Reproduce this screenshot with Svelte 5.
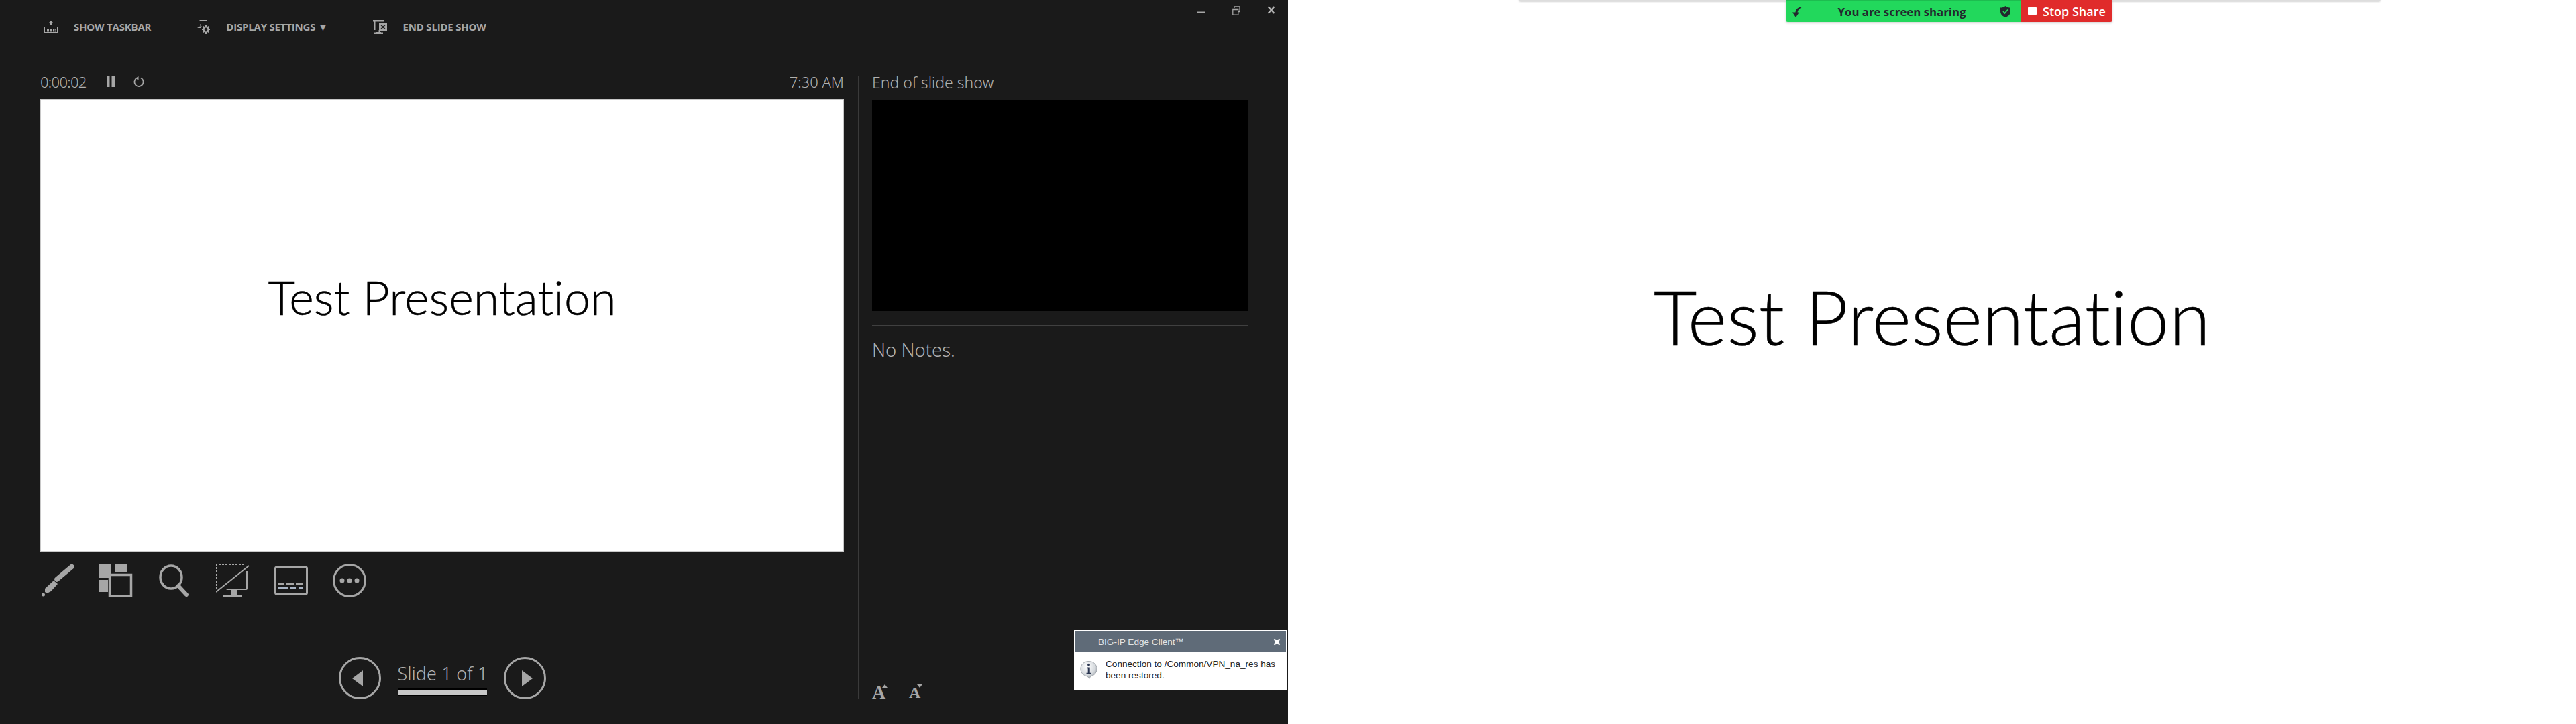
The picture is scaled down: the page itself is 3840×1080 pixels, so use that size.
<script>
  const title = "Test Presentation";
</script>

<div class="screens">
  <section class="presenter">
    <header class="topbar">
      <nav class="menu">
        <button class="menu-item">
          <svg width="20" height="18" viewBox="0 0 20 18">
            <path d="M10 0l4 4h-2.500v3h-3V4H6z" fill="#a6a6a6" />
            <rect x=".5" y="9.500" width="19" height="8" fill="none" stroke="#a6a6a6" />
            <path d="M4 12.500h3v3H4zM8.500 12.500h3v3h-3zM13 12.500h1.500v3H13zM15.500 12.500H17v1.200h-1.500zM15.500 14.500H17v1h-1.500z" fill="#a6a6a6" />
          </svg>
          <span>SHOW TASKBAR</span>
        </button>
        <button class="menu-item second">
          <svg width="19" height="20" viewBox="0 0 19 20">
            <path d="M3.500.5h11v10h-5M5 6v3" fill="none" stroke="#a6a6a6" />
            <path d="M0 12l4-2.500h3L5 12z" fill="#a6a6a6" />
            <circle cx="13" cy="14" r="3.600" fill="none" stroke="#a6a6a6" stroke-width="2.400" />
            <path d="M13 8v2.500M13 17.500V20M7 14h2.500M16.500 14H19M8.800 9.800l1.800 1.800M15.400 16.400l1.800 1.800M8.800 18.200l1.800-1.800M15.400 11.600l1.800-1.800" stroke="#a6a6a6" stroke-width="2" />
          </svg>
          <span>DISPLAY SETTINGS ▼</span>
        </button>
        <button class="menu-item third">
          <svg width="21" height="20" viewBox="0 0 21 20">
            <path d="M0 0h16v2.500H0zM2 2.500h1.500V15H2zM5 17h5v-2H8.500v2H12v1.500h3V20H1v-1.500h4z" fill="#a6a6a6" />
            <rect x="9" y="5" width="12" height="11" fill="#a6a6a6" />
            <path d="M12 7.500l6 6M18 7.500l-6 6" stroke="#1a1a1a" stroke-width="1.600" />
          </svg>
          <span>END SLIDE SHOW</span>
        </button>
      </nav>
      <div class="window-controls">
        <svg width="12" height="12" viewBox="0 0 12 12"><path d="M0 9.500h11" stroke="#a6a6a6" stroke-width="2" /></svg>
        <svg width="12" height="14" viewBox="0 0 12 14">
          <path d="M3 3V1h8v7.500H9M.8 4.500h8v8.700h-8zM.8 5.500h8" fill="none" stroke="#a6a6a6" stroke-width="1.300" />
        </svg>
        <svg width="12" height="12" viewBox="0 0 12 12"><path d="M1.500 1l9 10M10.500 1l-9 10" stroke="#b4b4b4" stroke-width="2.400" /></svg>
      </div>
    </header>
    <hr class="topbar-rule" />

    <div class="workspace">
      <div class="current">
        <div class="status">
          <span class="label">0:00:02</span>
          <svg class="pause" width="12" height="16" viewBox="0 0 12 16"><path d="M0 0h4.500v16H0zM7.500 0H12v16H7.500z" fill="#a6a6a6" /></svg>
          <svg class="restart" width="16" height="16" viewBox="0 0 16 16">
            <path d="M4.500 2.800A6.600 6.600 0 1 0 11 2.500" fill="none" stroke="#a6a6a6" stroke-width="1.800" />
            <path d="M7.500 0v6L3 2.800z" fill="#a6a6a6" />
          </svg>
          <span class="label clock">7:30 AM</span>
        </div>
        <div class="slide"><span class="slide-title small">{title}</span></div>

        <div class="tools">
          <svg width="50" height="50" viewBox="0 0 50 50">
            <path d="M24 23L46 4.500" stroke="#a6a6a6" stroke-width="7.500" stroke-linecap="round" />
            <path d="M19 25l6 5-10 11-6 3-3-2v-5z" fill="#a6a6a6" />
            <circle cx="3.500" cy="46" r="2.500" fill="#a6a6a6" />
          </svg>
          <svg width="50" height="50" viewBox="0 0 50 50">
            <path d="M0 0h17v21H0zM23 0h18v12H23zM0 24h13v18H0z" fill="#a6a6a6" />
            <rect x="15.500" y="16.500" width="32" height="32" fill="#1a1a1a" stroke="#a6a6a6" stroke-width="3.500" />
          </svg>
          <svg width="50" height="50" viewBox="0 0 50 50">
            <ellipse cx="20" cy="20" rx="16" ry="17" fill="none" stroke="#a6a6a6" stroke-width="3.500" />
            <path d="M31 33l12 13" stroke="#a6a6a6" stroke-width="6" stroke-linecap="round" />
          </svg>
          <svg width="50" height="50" viewBox="0 0 50 50">
            <path d="M1 38V1h44" fill="none" stroke="#a6a6a6" stroke-width="2" stroke-dasharray="3 2" />
            <path d="M0 42L49 3" stroke="#a6a6a6" stroke-width="2" />
            <path d="M44 11h3v26c0 1-1 2-2 2H15l2-1.500h27z" fill="#a6a6a6" />
            <path d="M22 39h9v7h8v4H11v-4h11z" fill="#a6a6a6" />
          </svg>
          <svg width="50" height="50" viewBox="0 0 50 50">
            <rect x="1.500" y="5" width="47" height="40" rx="2" fill="none" stroke="#a6a6a6" stroke-width="3" />
            <path d="M6 30h8M17 30h12M32 30h11" stroke="#a6a6a6" stroke-width="2" />
            <path d="M6 36h14M24 36h8M36 36h7" stroke="#a9b4c4" stroke-width="2" />
          </svg>
          <svg width="50" height="50" viewBox="0 0 50 50">
            <circle cx="25" cy="25" r="23.500" fill="none" stroke="#a6a6a6" stroke-width="3" />
            <circle cx="14" cy="25" r="3.500" fill="#a6a6a6" />
            <circle cx="25" cy="25" r="3.500" fill="#a6a6a6" />
            <circle cx="36" cy="25" r="3.500" fill="#a6a6a6" />
          </svg>
        </div>

        <div class="pager">
          <svg width="63" height="63" viewBox="0 0 63 63">
            <circle cx="31.500" cy="31.500" r="30" fill="none" stroke="#a6a6a6" stroke-width="3" />
            <path d="M36 20v24L20 32z" fill="#a6a6a6" />
          </svg>
          <div class="pager-label">
            <span>Slide 1 of 1</span>
            <div class="progress"></div>
          </div>
          <svg width="63" height="63" viewBox="0 0 63 63">
            <circle cx="31.500" cy="31.500" r="30" fill="none" stroke="#a6a6a6" stroke-width="3" />
            <path d="M27 20v24l16-12z" fill="#a6a6a6" />
          </svg>
        </div>
      </div>

      <div class="upcoming">
        <div class="next-label">End of slide show</div>
        <div class="next-slide"></div>
        <hr class="notes-rule" />
        <p class="notes">No Notes.</p>
        <div class="font-size">
          <span class="grow">A<i class="up"></i></span>
          <span class="shrink">A<i class="down"></i></span>
        </div>
      </div>
    </div>

    <aside class="toast">
      <div class="toast-head">
        <span>BIG-IP Edge Client™</span>
        <svg width="11" height="11" viewBox="0 0 12 12"><path d="M1.500 1.500l9 9M10.500 1.500l-9 9" stroke="#fff" stroke-width="2.800" /></svg>
      </div>
      <div class="toast-body">
        <svg width="26" height="29" viewBox="0 0 30 32">
          <defs>
            <radialGradient id="bubble" cx=".4" cy=".3" r=".8">
              <stop offset="0" stop-color="#ffffff" />
              <stop offset=".6" stop-color="#d6dade" />
              <stop offset="1" stop-color="#8f969e" />
            </radialGradient>
          </defs>
          <path d="M15 1c8 0 14 5.500 14 13s-6 12-11 13l-2 4-3-4C7 26 1 21.500 1 14S7 1 15 1z" fill="url(#bubble)" stroke="#9aa0a6" />
          <circle cx="15" cy="7" r="2.200" fill="#2a3550" />
          <path d="M11.500 11.500H17v9.500h2v2h-8v-2h2.500v-7.500h-2z" fill="#2a3550" />
        </svg>
        <p>Connection to /Common/VPN_na_res has been restored.</p>
      </div>
    </aside>
  </section>

  <section class="show">
    <div class="zoom-strip"></div>
    <div class="share-bar">
      <div class="share-status">
        <svg width="16" height="16" viewBox="0 0 16 16">
          <path d="M15 0C9 .5 5 3 4.500 8.500H0L5 16l5-7.500H7.500C8 5 10.500 2.500 15 0z" fill="#23272e" />
        </svg>
        <span>You are screen sharing</span>
        <svg width="15" height="17" viewBox="0 0 15 17">
          <path d="M7.500 0C10 2 12.500 2.500 15 2.500V8c0 4.500-3.500 7.500-7.500 9C3.500 15.500 0 12.500 0 8V2.500C2.500 2.500 5 2 7.500 0z" fill="#23272e" />
          <path d="M4 8l2.500 2.800L11 5.500" fill="none" stroke="#22d85c" stroke-width="1.800" />
        </svg>
      </div>
      <button class="stop-share"><i></i>Stop Share</button>
    </div>
    <span class="slide-title large">{title}</span>
  </section>
</div>

<style>
  :global(body) {
    margin: 0;
    background: #fff;
  }

  .screens {
    display: grid;
    grid-template-columns: 1920px 1920px;
    height: 1080px;
    overflow: hidden;
    font-family: "Noto Sans", "Open Sans", sans-serif;
  }

  .presenter {
    position: relative;
    background: #1a1a1a;
    color: #b0b0b0;
    display: flex;
    flex-direction: column;
  }

  .topbar {
    height: 68px;
    display: flex;
    justify-content: space-between;
    padding-left: 66px;
    box-sizing: border-box;
  }

  .menu {
    display: flex;
    align-items: flex-start;
    padding-top: 30px;
  }

  .menu-item {
    display: flex;
    align-items: center;
    gap: 24px;
    background: none;
    border: none;
    padding: 0;
    color: #a6a6a6;
    font-family: "Open Sans", sans-serif;
    font-size: 15px;
    font-weight: 700;
    letter-spacing: -0.2px;
    height: 20px;
  }

  .menu-item.second {
    margin-left: 69px;
  }

  .menu-item.third {
    margin-left: 67px;
  }

  .window-controls {
    display: flex;
    align-items: flex-start;
    gap: 40px;
    padding: 9px 19px 0 0;
  }

  .topbar-rule {
    margin: 0 60px;
    border: none;
    border-top: 1px solid #404040;
  }

  .workspace {
    display: flex;
    padding-left: 60px;
    flex: 1;
  }

  .current {
    width: 1198px;
    display: flex;
    flex-direction: column;
  }

  .status {
    box-sizing: border-box;
    height: 79px;
    padding: 38px 0 11px;
    display: flex;
    align-items: center;
  }

  .label {
    font-size: 22px;
    font-weight: 300;
    line-height: 30px;
    letter-spacing: -0.7px;
  }

  .pause {
    margin-left: 30px;
  }

  .restart {
    margin-left: 28px;
  }

  .clock {
    margin-left: auto;
    letter-spacing: 0;
  }

  .slide {
    height: 675px;
    box-sizing: border-box;
    background: #fff;
    border: 1px solid #c8c8c8;
    display: flex;
    justify-content: center;
    padding-top: 254px;
  }

  .slide-title {
    font-family: Lato, "Open Sans", sans-serif;
    font-weight: 300;
    font-variant-ligatures: none;
    color: #000;
    white-space: nowrap;
    -webkit-text-stroke: 0.5px #000;
  }

  .slide-title.small {
    font-size: 70px;
    line-height: 80px;
    height: 80px;
  }

  .slide-title.large {
    font-size: 112px;
    line-height: 130px;
    height: 130px;
  }

  .tools {
    display: flex;
    gap: 37px;
    padding: 18px 0 0 1px;
  }

  .pager {
    display: flex;
    justify-content: center;
    align-items: center;
    gap: 25px;
    margin-top: 89px;
  }

  .pager-label {
    width: 133px;
    display: flex;
    flex-direction: column;
    font-size: 27px;
    font-weight: 300;
    line-height: 38px;
    white-space: nowrap;
  }

  .progress {
    width: 133px;
    height: 7px;
    margin-top: 3px;
    background: #c8c8c8;
    border-top: 2px solid #000;
    border-bottom: 2px solid #000;
  }

  .upcoming {
    width: 560px;
    margin-left: 21px;
    padding-left: 20px;
    border-left: 1px solid #3a3a3a;
    margin-top: 44px;
    margin-bottom: 37px;
    display: flex;
    flex-direction: column;
  }

  .next-label {
    font-size: 23px;
    font-weight: 300;
    line-height: 20px;
    height: 36px;
  }

  .next-slide {
    height: 315px;
    background: #000;
  }

  .notes-rule {
    width: 100%;
    margin: 21px 0 0;
    border: none;
    border-top: 1px solid #404040;
  }

  .notes {
    margin: 17px 0 0;
    font-size: 27.5px;
    font-weight: 300;
    line-height: 38px;
  }

  .font-size {
    margin-top: auto;
    display: flex;
    align-items: flex-end;
    gap: 32px;
    font-family: "Liberation Serif", serif;
    font-weight: 700;
    line-height: 20px;
    color: #a6a6a6;
  }

  .font-size span {
    position: relative;
    display: block;
  }

  .grow {
    font-size: 28px;
    width: 23px;
  }

  .shrink {
    font-size: 24px;
    width: 20px;
  }

  .font-size i {
    position: absolute;
    right: 0;
    top: -2px;
    border-left: 4px solid transparent;
    border-right: 4px solid transparent;
  }

  .up {
    border-bottom: 5px solid #a6a6a6;
  }

  .down {
    border-top: 5px solid #a6a6a6;
  }

  .toast {
    position: absolute;
    left: 1601px;
    top: 940px;
    width: 318px;
    height: 90px;
    background: #fff;
    color: #222;
    font-family: "Liberation Sans", sans-serif;
    font-size: 13.6px;
    padding: 2px;
    box-sizing: border-box;
  }

  .toast-head {
    height: 30px;
    background: #5f6b78;
    color: #e2e4e6;
    display: flex;
    align-items: center;
    justify-content: space-between;
    padding: 0 8px 0 34px;
  }

  .toast-body {
    display: flex;
    align-items: center;
    gap: 12px;
    padding: 10px 8px 0 7px;
  }

  .toast-body svg {
    flex-shrink: 0;
  }

  .toast-body p {
    margin: 0;
    line-height: 17px;
  }

  .show {
    position: relative;
    background: #fff;
    display: flex;
    justify-content: center;
    padding-top: 407px;
    box-sizing: border-box;
  }

  .zoom-strip {
    position: absolute;
    left: 345px;
    top: -3px;
    width: 1283px;
    height: 4px;
    background: #ddd;
    box-shadow: 0 1px 3px rgba(0, 0, 0, 0.35);
  }

  .share-bar {
    position: absolute;
    left: 742px;
    top: 0;
    height: 33px;
    display: flex;
    box-shadow: 0 2px 3px rgba(0, 0, 0, 0.15);
    border-radius: 0 0 3px 3px;
    overflow: hidden;
    font-family: "Open Sans", sans-serif;
    font-size: 18px;
    font-weight: 600;
  }

  .share-status {
    width: 351px;
    box-sizing: border-box;
    background: #22d85c;
    border-top: 2px solid #1dbd50;
    color: #23272e;
    display: flex;
    align-items: center;
    padding: 0 16px 0 10px;
    justify-content: space-between;
    font-size: 16.8px;
    font-weight: 700;
  }

  .stop-share {
    width: 136px;
    display: flex;
    align-items: center;
    gap: 9px;
    padding: 0 0 0 10px;
    background: #e02b2b;
    color: #fff;
    border: none;
    font: inherit;
  }

  .stop-share i {
    width: 13px;
    height: 13px;
    background: #fff;
    border-radius: 2px;
  }
</style>
